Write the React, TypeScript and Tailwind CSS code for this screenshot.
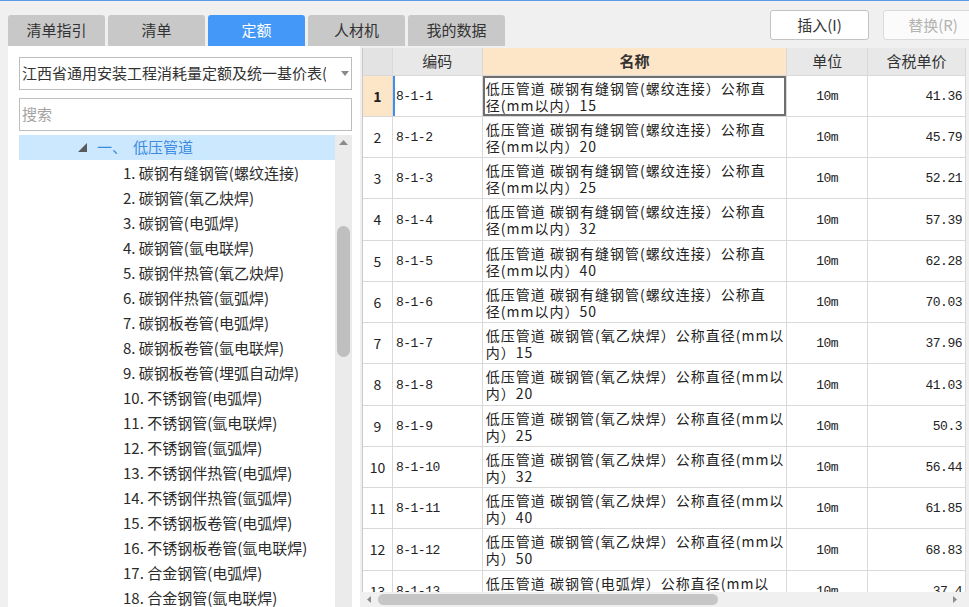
import React from "react"

const tabs = ["清单指引", "清单", "定额", "人材机", "我的数据"]

const treeItems = [
  "1. 碳钢有缝钢管(螺纹连接)",
  "2. 碳钢管(氧乙炔焊)",
  "3. 碳钢管(电弧焊)",
  "4. 碳钢管(氩电联焊)",
  "5. 碳钢伴热管(氧乙炔焊)",
  "6. 碳钢伴热管(氩弧焊)",
  "7. 碳钢板卷管(电弧焊)",
  "8. 碳钢板卷管(氩电联焊)",
  "9. 碳钢板卷管(埋弧自动焊)",
  "10. 不锈钢管(电弧焊)",
  "11. 不锈钢管(氩电联焊)",
  "12. 不锈钢管(氩弧焊)",
  "13. 不锈钢伴热管(电弧焊)",
  "14. 不锈钢伴热管(氩弧焊)",
  "15. 不锈钢板卷管(电弧焊)",
  "16. 不锈钢板卷管(氩电联焊)",
  "17. 合金钢管(电弧焊)",
  "18. 合金钢管(氩电联焊)",
]

const luoWen = "低压管道 碳钢有缝钢管(螺纹连接）公称直"
const yangYi = "低压管道 碳钢管(氧乙炔焊）公称直径(mm以"

const rows: { code: string; line1: string; line2: string; price: string }[] = [
  { code: "8-1-1", line1: luoWen, line2: "径(mm以内）15", price: "41.36" },
  { code: "8-1-2", line1: luoWen, line2: "径(mm以内）20", price: "45.79" },
  { code: "8-1-3", line1: luoWen, line2: "径(mm以内）25", price: "52.21" },
  { code: "8-1-4", line1: luoWen, line2: "径(mm以内）32", price: "57.39" },
  { code: "8-1-5", line1: luoWen, line2: "径(mm以内）40", price: "62.28" },
  { code: "8-1-6", line1: luoWen, line2: "径(mm以内）50", price: "70.03" },
  { code: "8-1-7", line1: yangYi, line2: "内）15", price: "37.96" },
  { code: "8-1-8", line1: yangYi, line2: "内）20", price: "41.03" },
  { code: "8-1-9", line1: yangYi, line2: "内）25", price: "50.3" },
  { code: "8-1-10", line1: yangYi, line2: "内）32", price: "56.44" },
  { code: "8-1-11", line1: yangYi, line2: "内）40", price: "61.85" },
  { code: "8-1-12", line1: yangYi, line2: "内）50", price: "68.83" },
  { code: "8-1-13", line1: "低压管道 碳钢管(电弧焊）公称直径(mm以", line2: "内）15", price: "37.4" },
]

const Caret = ({ className }: { className?: string }) => (
  <svg width="8" height="5" viewBox="0 0 8 5" className={className}>
    <polygon points="0,0 8,0 4,5" fill="currentColor" />
  </svg>
)

const LeftPanel = () => (
  <div className="ml-[8px] flex w-[352px] shrink-0 flex-col bg-white pt-[11px] pl-[11px] pr-[8px]">
    <div className="flex h-[33px] items-center border border-[#bdbdbd] pl-[2px]">
      <div className="w-[304px] overflow-hidden whitespace-nowrap text-[15px] text-[#333]">
        江西省通用安装工程消耗量定额及统一基价表(2017)
      </div>
      <Caret className="ml-[15px] text-[#8a8a8a]" />
    </div>
    <div className="mt-[8px] flex h-[33px] items-center border border-[#bdbdbd] pl-[2px] text-[15px] text-[#a3a3a3]">
      搜索
    </div>
    <div className="mt-[4px] flex min-h-0 flex-1">
      <div className="w-[316px] overflow-hidden">
        <div className="flex h-[25px] items-center bg-[#cce8ff] pl-[59px] text-[15px] text-[#3a8be0]">
          <svg width="9" height="9" viewBox="0 0 9 9" className="mr-[10px]">
            <polygon points="9,0 9,9 0,9" fill="#5a5a5a" />
          </svg>
          <span>一、</span>
          <span className="ml-[6px]">低压管道</span>
        </div>
        {treeItems.map((t) => (
          <div key={t} className="h-[25px] whitespace-nowrap pl-[104px] text-[15px] leading-[25px] text-[#2b2b2b]">
            {t}
          </div>
        ))}
      </div>
      <div className="flex w-[17px] shrink-0 flex-col items-center bg-[#ebebeb]">
        <svg width="9" height="5" viewBox="0 0 9 5" className="mt-[5px] text-[#8c8c8c]">
          <polygon points="0,5 9,5 4.5,0" fill="currentColor" />
        </svg>
        <div className="mt-[81px] h-[131px] w-[13px] rounded-full bg-[#bfbfbf]" />
      </div>
    </div>
  </div>
)

const cellBorder = "border-r border-b border-[#d9d9d9]"
const mono = "font-['Liberation_Mono',monospace] text-[13px] tracking-[-0.5px]"

const Table = () => (
  <div className="ml-[2px] mt-[2px] flex min-w-0 flex-1 flex-col">
    <div className="flex min-h-0 flex-1 overflow-hidden">
      <div className="flex w-[604px] shrink-0 flex-col border-l border-[#c9c9c9]">
        <div className="flex h-[28px] shrink-0 text-[15px] text-[#333]">
          <div className={`w-[30px] bg-[#e3e3e3] ${cellBorder}`} />
          <div className={`flex w-[90px] items-center justify-center bg-[#e8e8e8] ${cellBorder}`}>编码</div>
          <div className={`flex w-[305px] items-center justify-center bg-[#fde5c8] font-bold ${cellBorder}`}>名称</div>
          <div className={`flex w-[81px] items-center justify-center bg-[#e8e8e8] ${cellBorder}`}>单位</div>
          <div className={`flex w-[98px] items-center justify-center bg-[#e8e8e8] ${cellBorder}`}>含税单价</div>
        </div>
        <div className="min-h-0 flex-1 overflow-hidden bg-white">
          {rows.map((r, i) => {
            const sel = i === 0
            return (
              <div key={r.code} className={`flex text-[#222] ${i % 4 === 3 ? "h-[42px]" : "h-[41px]"}`}>
                <div
                  className={`flex w-[30px] items-center justify-center text-[14px] ${cellBorder} ${
                    sel ? "bg-[#fde5c8] font-bold" : ""
                  }`}
                >
                  {i + 1}
                </div>
                <div
                  className={`flex w-[90px] items-center pl-[3px] pt-[2px] ${mono} ${cellBorder} ${
                    sel ? "shadow-[inset_2px_0_0_0_#3d8fe8]" : ""
                  }`}
                >
                  {r.code}
                </div>
                <div
                  className={`flex w-[305px] flex-col justify-center pl-[3px] pt-[1px] text-[14px] leading-[17px] tracking-[1px] ${cellBorder} ${
                    sel ? "shadow-[inset_0_0_0_2px_#6f6f6f]" : ""
                  }`}
                >
                  <div className="whitespace-nowrap">{r.line1}</div>
                  <div className="whitespace-nowrap">{r.line2}</div>
                </div>
                <div className={`flex w-[81px] items-center justify-center pt-[2px] ${mono} ${cellBorder}`}>10m</div>
                <div className={`flex w-[98px] items-center justify-end pr-[3px] pt-[2px] ${mono} ${cellBorder}`}>
                  {r.price}
                </div>
              </div>
            )
          })}
        </div>
      </div>
      <div className="flex w-[17px] shrink-0 flex-col items-center bg-[#f0f0f0]">
        <svg width="7" height="4" viewBox="0 0 7 4" className="mt-[8px] text-[#8c8c8c]">
          <polygon points="0,4 7,4 3.5,0" fill="currentColor" />
        </svg>
        <div className="mt-[7px] h-[60px] w-[11px] rounded-full bg-[#c4c4c4]" />
      </div>
    </div>
    <div className="flex h-[15px] shrink-0 items-center bg-[#f0f0f0]">
      <svg width="4" height="7" viewBox="0 0 4 7" className="ml-[5px] text-[#8c8c8c]">
        <polygon points="4,0 4,7 0,3.5" fill="currentColor" />
      </svg>
      <div className="ml-[7px] h-[11px] w-[340px] rounded-full bg-[#c6c6c6]" />
      <svg width="4" height="7" viewBox="0 0 4 7" className="ml-[235px] text-[#8c8c8c]">
        <polygon points="0,0 0,7 4,3.5" fill="currentColor" />
      </svg>
    </div>
  </div>
)

export default function App() {
  return (
    <div className="h-[607px] w-[969px] overflow-hidden border-t border-[#5b9be8] bg-[#f0f0f0] font-['Noto_Sans_CJK_SC','Noto_Sans',sans-serif] text-[#333]">
      <div className="flex h-[45px] items-start">
        <div className="ml-[8px] mt-[14px] flex gap-[3px]">
          {tabs.map((t) => (
            <div
              key={t}
              className={`flex h-[31px] w-[97px] items-center justify-center rounded-t-[3px] text-[15px] ${
                t === "定额" ? "bg-[#4498f7] text-white" : "bg-[#c8c8c8] text-[#333]"
              }`}
            >
              {t}
            </div>
          ))}
        </div>
        <div className="ml-[265px] mt-[9px] flex shrink-0 gap-[14px]">
          <div className="flex h-[30px] w-[99px] items-center justify-center rounded-[3px] border border-[#c3c3c3] bg-white text-[15px] text-[#333]">
            插入(I)
          </div>
          <div className="flex h-[30px] w-[100px] items-center justify-center rounded-[3px] border border-[#dadada] bg-[#fbfbfb] text-[15px] text-[#b3b3b3]">
            替换(R)
          </div>
        </div>
      </div>
      <div className="flex h-[561px]">
        <LeftPanel />
        <Table />
      </div>
    </div>
  )
}
